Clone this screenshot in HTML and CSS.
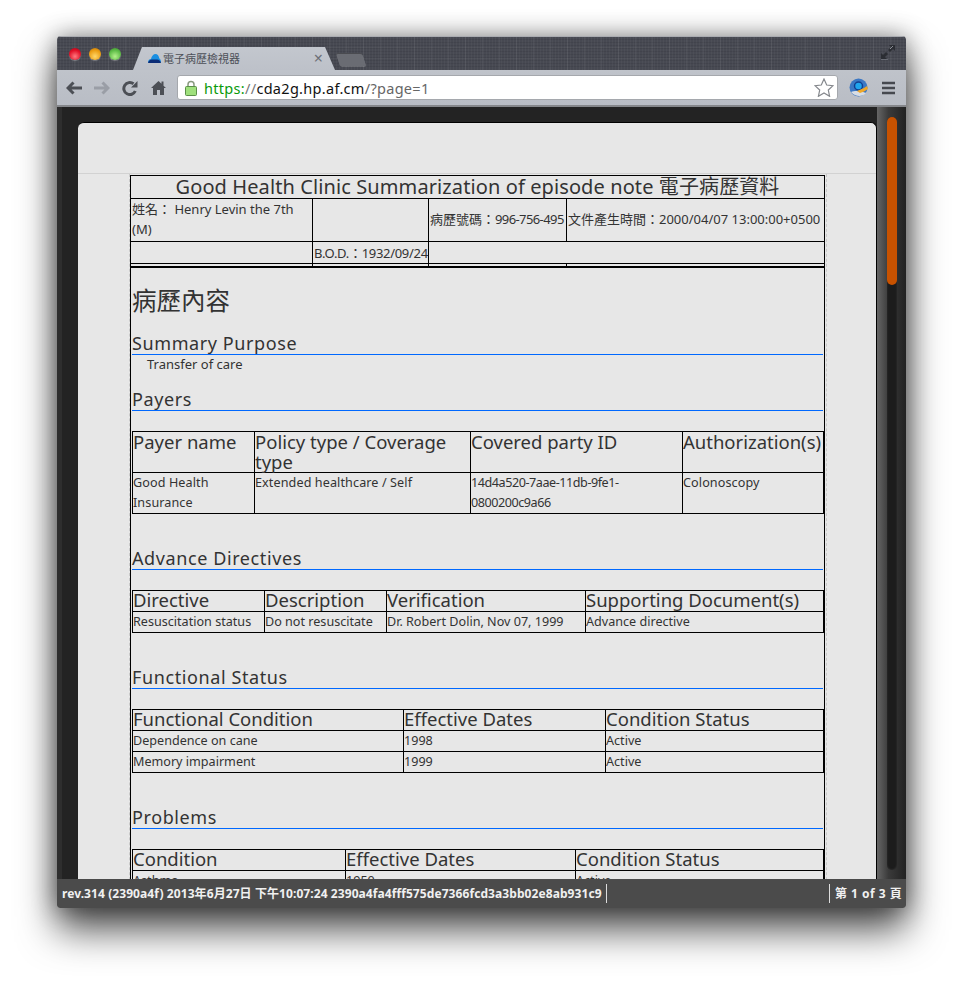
FILE: index.html
```html
<!DOCTYPE html>
<html lang="zh-Hant">
<head>
<meta charset="utf-8">
<title>電子病歷檢視器</title>
<link rel="stylesheet" href="styles.css">
</head>
<body>
<div class="window">
  <div class="tabstrip">
    <div class="lights"><span class="light red"></span><span class="light amber"></span><span class="light green"></span></div>
    <div class="tab">
      <svg class="favicon" width="13" height="10" viewBox="0 0 13 10"><path d="M0 9.500C0 7 1.500 6 3 6 3.500 3 5.500 1 7.500 1 9.500 1 11 3 11.300 5.500 12.500 6 13 7.500 13 9.500Z" fill="#1a8fe2"/><path d="M0 10C.5 8 2 6.500 4 6.500H9C11 6.500 12.500 8 13 10Z" fill="#0b2c76"/></svg>
      <span class="tab-title">電子病歷檢視器</span>
      <span class="tab-close">×</span>
    </div>
    <div class="newtab"></div>
    <svg class="fullscreen" width="14" height="15" viewBox="0 0 14 15"><path d="M8 0H14V6L12 4 9 7 7 5 10 2Z" fill="#2b2d33"/><path d="M0 8 2 10 5 7 7 9 4 12 6 14H0Z" fill="#2b2d33"/><path d="M0 15H7M9 4 12 1" stroke="#8b8e96" fill="none"/></svg>
  </div>
  <div class="toolbar">
    <button class="tool"><svg width="16" height="14" viewBox="0 0 16 14"><path d="M7.500 1.500 2 7l5.500 5.500M3 7H16" fill="none" stroke="#4c4f55" stroke-width="3"/></svg></button>
    <button class="tool"><svg width="16" height="14" viewBox="0 0 16 14"><path d="M8.500 1.500 14 7l-5.500 5.500M13 7H0" fill="none" stroke="#9a9ea6" stroke-width="3"/></svg></button>
    <button class="tool"><svg width="16" height="16" viewBox="0 0 16 16"><path d="M13.300 11A6 6 0 1 1 11.500 3.800" fill="none" stroke="#4c4f55" stroke-width="3"/><path d="M9 7.500H15.500V1Z" fill="#4c4f55"/></svg></button>
    <button class="tool"><svg width="15" height="15" viewBox="0 0 15 15"><path d="M7.500 1 0 8H2V15H6V10H9V15H13V8H15L12.500 5.700V1.500H10.500V3.800Z" fill="#4c4f55"/></svg></button>
    <div class="omnibox">
      <svg class="lock" width="12" height="16" viewBox="0 0 12 16"><path d="M3 7V4.500a3 3 0 0 1 6 0V7" fill="none" stroke="#8a9a80" stroke-width="1.500"/><rect x=".5" y="6.500" width="11" height="9" rx="1" fill="#9fe07c" stroke="#5b8f48"/></svg>
      <span class="url"><span class="scheme">https:</span><span class="scheme-sep">//</span><span class="host">cda2g.hp.af.cm</span><span class="path">/?page=1</span></span>
      <svg class="star" width="20" height="19" viewBox="0 0 20 19"><path d="M10 1l2.700 6 6.300.7-4.700 4.300 1.300 6.300L10 15l-5.600 3.300L5.700 12 1 7.700 7.300 7Z" fill="#fff" stroke="#85888d" stroke-width="1.200"/></svg>
    </div>
    <button class="tool ext"><svg width="19" height="19" viewBox="0 0 19 19"><circle cx="9.500" cy="9.500" r="9" fill="#3c78c4"/><path d="M2 14C6 12 13 13 17 15 14 19 6 19 2 14Z" fill="#d8dde4"/><circle cx="9.500" cy="8" r="4" fill="#1fa6ee" stroke="#123f8f" stroke-width="1.500"/><path d="M8 13 15 10 18 8 19 11 15 13.500 11 15Z" fill="#f0a828"/></svg></button>
    <button class="tool menu"><svg width="13" height="14" viewBox="0 0 13 14"><path d="M0 2H13M0 7H13M0 12H13" stroke="#46494f" stroke-width="2.400"/></svg></button>
  </div>
  <div class="viewport">
    <div class="card">
      <div class="card-band"></div>
      <div class="doc">
        <table class="head-table">
          <colgroup><col class="h1"><col class="h2"><col class="h3"><col class="h4"></colgroup>
          <tr class="title-row"><td colspan="4">Good Health Clinic Summarization of episode note 電子病歷資料</td></tr>
          <tr class="info-row"><td class="top">姓名： Henry Levin the 7th (M)</td><td></td><td>病歷號碼：<span class="num">996-756-495</span></td><td>文件產生時間：2000/04/07 13:00:00+0500</td></tr>
          <tr class="bod-row"><td></td><td><span class="bod">B.O.D.：1932/09/24</span></td><td colspan="2"></td></tr>
          <tr class="stub-row"><td></td><td></td><td></td><td></td></tr>
        </table>
        <div class="record">
          <h2>病歷內容</h2>
          <h3>Summary Purpose</h3>
          <p class="purpose">Transfer of care</p>
          <h3>Payers</h3>
          <table class="data payers">
            <colgroup><col class="p1"><col class="p2"><col class="p3"><col class="p4"></colgroup>
            <tr><th>Payer name</th><th>Policy type / Coverage type</th><th>Covered party ID</th><th>Authorization(s)</th></tr>
            <tr><td>Good Health Insurance</td><td>Extended healthcare / Self</td><td><span class="uuid">14d4a520-7aae-11db-9fe1-0800200c9a66</span></td><td>Colonoscopy</td></tr>
          </table>
          <h3>Advance Directives</h3>
          <table class="data">
            <colgroup><col class="a1"><col class="a2"><col class="a3"><col class="a4"></colgroup>
            <tr><th>Directive</th><th>Description</th><th>Verification</th><th>Supporting Document(s)</th></tr>
            <tr><td>Resuscitation status</td><td>Do not resuscitate</td><td>Dr. Robert Dolin, Nov 07, 1999</td><td>Advance directive</td></tr>
          </table>
          <h3>Functional Status</h3>
          <table class="data">
            <colgroup><col class="f1"><col class="f2"><col class="f3"></colgroup>
            <tr><th>Functional Condition</th><th>Effective Dates</th><th>Condition Status</th></tr>
            <tr><td>Dependence on cane</td><td>1998</td><td>Active</td></tr>
            <tr><td>Memory impairment</td><td>1999</td><td>Active</td></tr>
          </table>
          <h3>Problems</h3>
          <table class="data">
            <colgroup><col class="b1"><col class="b2"><col class="b3"></colgroup>
            <tr><th>Condition</th><th>Effective Dates</th><th>Condition Status</th></tr>
            <tr><td>Asthma</td><td>1950</td><td>Active</td></tr>
          </table>
        </div>
      </div>
    </div>
    <div class="scrollbar"><div class="track"><div class="thumb"></div></div></div>
  </div>
  <div class="statusbar">
    <span class="status-rev">rev.314 (2390a4f) 2013年6月27日 下午10:07:24 2390a4fa4fff575de7366fcd3a3bb02e8ab931c9</span>
    <span class="status-page">第 1 of 3 頁</span>
  </div>
</div>
</body>
</html>
```

FILE: styles.css
```css
html, body { margin: 0; height: 988px; overflow: hidden; background: #fff; }
body { font-family: "Noto Sans", "Noto Sans CJK TC", sans-serif; color: #333; }

.window {
  width: 849px; height: 872px; margin: 36px 0 0 57px;
  display: flex; flex-direction: column;
  border-radius: 4px 4px 3px 3px; overflow: hidden;
  box-shadow: 0 22px 38px rgba(0,0,0,.68), 0 0 24px rgba(0,0,0,.42);
}

.tabstrip {
  height: 34px; flex: none; display: flex; align-items: flex-end;
  border-top: 1px solid #a9abb0; box-sizing: border-box;
  background-color: #474952;
  background-image:
    repeating-linear-gradient(90deg, rgba(255,255,255,.05) 0 1px, transparent 1px 17px),
    repeating-linear-gradient(0deg, rgba(255,255,255,.03) 0 1px, transparent 1px 11px),
    repeating-linear-gradient(90deg, rgba(255,255,255,.03) 0 1px, transparent 1px 3px),
    repeating-linear-gradient(0deg, rgba(0,0,0,.08) 0 1px, transparent 1px 3px);
}
.lights { display: flex; gap: 8px; margin: 0 0 10px 12px; width: 64px; flex: none; }
.light { width: 12px; height: 12px; border-radius: 50%; box-shadow: 0 1px 1px rgba(255,255,255,.3); }
.red { background: radial-gradient(circle at 50% 70%, #ff7a80, #e00f26 60%, #a10a1a); }
.amber { background: radial-gradient(circle at 50% 70%, #ffd76a, #eb9d12 60%, #b46f0a); }
.green { background: radial-gradient(circle at 50% 70%, #b4f08c, #5cbb46 60%, #3b8a2c); }

.tab {
  width: 202px; height: 23px; flex: none; box-sizing: border-box;
  padding: 0 12px 2px 15px; display: flex; align-items: center; gap: 2px;
  background: linear-gradient(#c3c7ce, #bdc1c9);
  clip-path: polygon(0 100%, 9px 0, 192px 0, 100% 100%);
  font-size: 11px; color: #4d5058;
}
.favicon { flex: none; }
.tab-title { flex: 1; white-space: nowrap; }
.tab-close { color: #6d7078; font-size: 16px; line-height: 16px; }
.newtab {
  width: 26px; height: 13px; margin: 0 0 4px 3px;
  background: #6a6c73; border-radius: 2px; transform: skewX(18deg);
  box-shadow: inset 0 1px 0 rgba(0,0,0,.3), 0 1px 0 rgba(255,255,255,.2);
}
.fullscreen { margin: 0 11px 10px auto; }

.toolbar {
  height: 37px; flex: none; display: flex; align-items: center; padding-left: 3px; box-sizing: border-box;
  background: linear-gradient(#bfc3ca, #b9bdc5);
  border-bottom: 2px solid #85878b;
}
.tool { width: 28px; height: 28px; padding: 0; border: 0; background: none; display: flex; align-items: center; justify-content: center; flex: none; }
.omnibox {
  width: 661px; height: 25px; margin-left: 5px; box-sizing: border-box; flex: none;
  background: #fff; border: 1px solid #a5a8ad; border-radius: 3px;
  display: flex; align-items: center; padding: 0 3px 0 7px; gap: 7px;
}
.url { flex: 1; font-size: 14.500px; letter-spacing: .3px; white-space: nowrap; }
.scheme { color: #0a9a0a; }
.scheme-sep { color: #777; }
.host { color: #111; }
.path { color: #666; }
.ext { width: 30px; margin-left: 5px; }
.menu { width: 30px; }

.viewport { flex: 1; min-height: 0; display: flex; overflow: hidden; background: linear-gradient(90deg, #2e2e2e 0 5px, #232323 5px); }
.card {
  width: 799px; margin: 15px 0 0 21px; box-sizing: border-box; flex: none;
  background: #e7e7e7; border-top: 1px solid #000; border-radius: 6px 6px 0 0;
  border-right: 1px solid #000;
}
.card-band { height: 50px; border-bottom: 1px solid #d2d2d2; }
.doc {
  margin: 0 49px 0 51px; padding-top: 1px; height: 800px;
  border-left: 1px dashed #c8c8c8; border-right: 1px dashed #c8c8c8;
}

.head-table { border-collapse: collapse; table-layout: fixed; width: 694px; font-size: 13px; }
.head-table td { border: 1px solid #000; padding: 0 1px; vertical-align: middle; color: #333; line-height: 20px; white-space: normal; }
.h1 { width: 182px; } .h2 { width: 116px; } .h3 { width: 138px; } .h4 { width: 258px; }
.title-row td { height: 22px; padding: 0; text-align: center; font-size: 20px; letter-spacing: .1px; line-height: 22px; }
.info-row td { height: 40px; padding-bottom: 2px; white-space: nowrap; }
.info-row td.top { vertical-align: top; padding-bottom: 0; height: 42px; white-space: normal; }
.num { letter-spacing: -.6px; }
.bod { letter-spacing: -.3px; }
.bod-row td { height: 21px; white-space: nowrap; }
.head-table .stub-row td { height: 2px; line-height: 2px; padding: 0; font-size: 0; }

.record { border: 1px solid #000; border-bottom: 0; width: 691px; padding: 0 1px; }
h2 { margin: 0; padding: 18px 0 15px; font-size: 24.500px; line-height: 30px; font-weight: 400; color: #333; }
h3 {
  margin: 0; height: 23px; line-height: 25px; font-size: 18px; font-weight: 400; color: #333;
  border-bottom: 1px solid #0068ff; letter-spacing: .6px; width: 691px;
}
.purpose { margin: -1px 0 13px; padding-left: 15px; font-size: 13px; line-height: 20px; }
.data { border-collapse: collapse; table-layout: fixed; width: 691px; margin: 20px 0 32px; }
.data th, .data td { border: 1px solid #000; padding: 0 1px 0 0; text-align: left; vertical-align: top; color: #333; }
.data th { font-size: 18.500px; font-weight: 400; line-height: 18px; padding-bottom: 2px; }
.data td { font-size: 12.600px; line-height: 20px; }
.payers th { line-height: 20px; padding-bottom: 0; }
.payers td { letter-spacing: .1px; }
.uuid { letter-spacing: -.45px; }
.p1 { width: 122px; } .p2 { width: 216px; } .p3 { width: 212px; } .p4 { width: 141px; }
.a1 { width: 132px; } .a2 { width: 122px; } .a3 { width: 199px; } .a4 { width: 238px; }
.f1 { width: 271px; } .f2 { width: 202px; } .f3 { width: 218px; }
.b1 { width: 213px; } .b2 { width: 230px; } .b3 { width: 248px; }

.scrollbar {
  flex: 1; box-sizing: border-box; padding: 10px 9px 9px 10px;
  background: linear-gradient(90deg, #666 0, #3a3a3a 40%, #222 100%);
}
.track { height: 100%; background: #1c1c1c; border-radius: 5px; box-shadow: inset 0 0 2px #3c3c3c; }
.thumb { height: 168px; background: #c85200; border-radius: 5px; }

.statusbar {
  height: 29px; flex: none; display: flex; align-items: stretch; background: #4b4b4b;
  color: #f0f0f0; font-size: 12px; font-weight: 700; letter-spacing: .08px;
}
.status-rev { margin: 5px 0; padding: 0 4px 0 5px; border-right: 1px solid #ddd; line-height: 19px; white-space: nowrap; }
.status-page { margin: 5px 0 5px auto; width: 77px; box-sizing: border-box; padding-left: 5px; border-left: 1px solid #ddd; line-height: 19px; white-space: nowrap; letter-spacing: .5px; }
```
